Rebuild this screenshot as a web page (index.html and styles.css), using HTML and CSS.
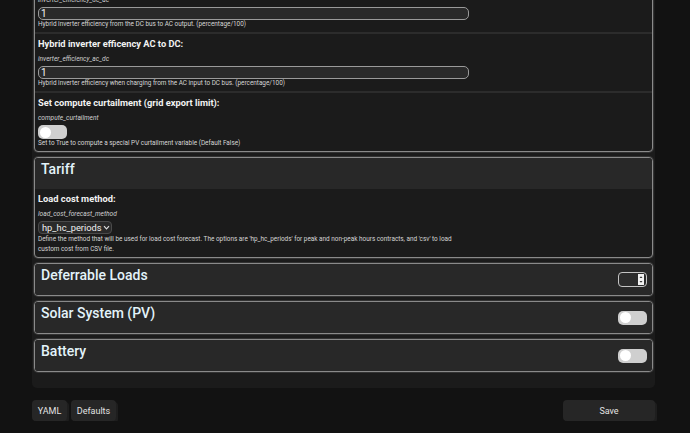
FILE: index.html
```html
<!DOCTYPE html>
<html lang="en">
<head>
    <meta charset="UTF-8" />
    <title>Config</title>
    <link rel="stylesheet" href="styles.css">
</head>
<body>
    <div class="main">
        <div class="box">
            <div class="row">
                <div class="label">Hybrid inverter efficency DC to AC:</div>
                <div class="param">inverter_efficiency_dc_ac</div>
                <div class="field">1</div>
                <div class="desc">Hybrid inverter efficiency from the DC bus to AC output. (percentage/100)</div>
            </div>
            <div class="row">
                <div class="label">Hybrid inverter efficency AC to DC:</div>
                <div class="param">inverter_efficiency_ac_dc</div>
                <div class="field">1</div>
                <div class="desc">Hybrid inverter efficiency when charging from the AC input to DC bus. (percentage/100)</div>
            </div>
            <div class="row">
                <div class="label">Set compute curtailment (grid export limit):</div>
                <div class="param">compute_curtailment</div>
                <span class="toggle"></span>
                <div class="desc">Set to True to compute a special PV curtailment variable (Default False)</div>
            </div>
        </div>

        <div class="box">
            <div class="head"><span class="title">Tariff</span></div>
            <div class="row">
                <div class="label">Load cost method:</div>
                <div class="param">load_cost_forecast_method</div>
                <div class="select">hp_hc_periods
                    <svg width="7" height="5" viewBox="0 0 7 5"><path d="M1 1.2 L3.5 3.8 L6 1.2" fill="none" stroke="#ddd" stroke-width="1.2"/></svg>
                </div>
                <div class="desc">Define the method that will be used for load cost forecast. The options are 'hp_hc_periods' for peak and non-peak hours contracts, and 'csv' to load custom cost from CSV file.</div>
            </div>
        </div>

        <div class="box">
            <div class="head">
                <span class="title">Deferrable Loads</span>
                <span class="num">
                    <svg class="spin" width="6" height="11" viewBox="0 0 6 11">
                        <rect width="6" height="11" fill="#f2f2f2"/>
                        <path d="M1.5 4 L3 2.3 L4.5 4 Z M1.5 7 L3 8.7 L4.5 7 Z" fill="#333"/>
                    </svg>
                </span>
            </div>
        </div>

        <div class="box">
            <div class="head">
                <span class="title">Solar System (PV)</span>
                <span class="toggle"></span>
            </div>
        </div>

        <div class="box">
            <div class="head">
                <span class="title">Battery</span>
                <span class="toggle"></span>
            </div>
        </div>
    </div>

    <div class="actions">
        <div class="left">
            <button class="btn yaml">YAML</button>
            <button class="btn defaults">Defaults</button>
        </div>
        <button class="btn save">Save</button>
    </div>
</body>
</html>
```

FILE: styles.css
```css
body{
    margin: 0;
    background: #121212;
    color: #e8e8e8;
    font-family: Roboto, "Liberation Sans", sans-serif;
    overflow: hidden;
}
.main{
    width: 619px;
    margin: -28px 0 0 32px;
    padding: 2px 2px 16px;
    background: #1b1b1b;
    border-radius: 0 0 5px 5px;
    display: flex;
    flex-direction: column;
    gap: 5px;
}
.box{
    border: 1px solid #8a8a8a;
    border-radius: 4px;
    box-shadow: 0 0 0 1px #333;
    background: #1b1b1b;
    overflow: hidden;
}
.row{
    padding: 3px 3px 3px;
    display: flex;
    flex-direction: column;
    align-items: flex-start;
}
.row + .row{
    border-top: 2px solid #2c2c2c;
}
.label{
    font-size: 9.3px;
    font-weight: 700;
    line-height: 14px;
    color: #f2f2f2;
}
.param{
    font-size: 6.6px;
    font-style: italic;
    line-height: 10px;
    margin-top: 3px;
    color: #d0d0d0;
}
.field{
    width: 425px;
    height: 11px;
    margin-top: 2px;
    padding: 0 2px;
    border: 1px solid #9a9a9a;
    border-radius: 5px;
    background: #2a2a2a;
    font-size: 10px;
    line-height: 11px;
    color: #f4f4f4;
}
.desc{
    font-size: 6.4px;
    line-height: 9px;
    max-width: 430px;
    color: #d6d6d6;
}
.toggle{
    display: block;
    width: 29px;
    height: 14px;
    margin-top: 2px;
    border-radius: 5px;
    background: #cfcfcf;
    position: relative;
    flex-shrink: 0;
}
.toggle::after{
    content: "";
    position: absolute;
    left: 2px;
    top: 1.5px;
    width: 11px;
    height: 11px;
    border-radius: 50%;
    background: #fff;
}
.head{
    background: #282828;
    display: flex;
    justify-content: space-between;
}
.title{
    padding: 2px 6px 11px;
    font-size: 14px;
    font-weight: 500;
    line-height: 18px;
    color: #e3f3fa;
}
.head .toggle,
.head .num{
    align-self: center;
    margin: 0 5px 0 0;
}
.num{
    width: 25px;
    height: 13px;
    border: 1px solid #c4c4c4;
    border-radius: 4px;
    background: #2c2c2c;
    display: flex;
    align-items: center;
    justify-content: flex-end;
    padding-right: 2px;
    box-sizing: content-box;
}
.num .spin{
    display: block;
}
.select{
    margin-top: 2px;
    height: 13px;
    padding: 0 1px 0 3px;
    border: 1px solid #4a4a4a;
    border-radius: 4px;
    background: #2a2a2a;
    box-sizing: border-box;
    font-size: 9.3px;
    line-height: 11px;
    color: #f0f0f0;
    display: flex;
    align-items: center;
    gap: 1px;
}
.select + .desc{
    line-height: 10px;
}
.actions{
    display: flex;
    justify-content: space-between;
    margin: 12px 35px 0 32px;
}
.left{
    display: flex;
    gap: 4px;
}
.btn{
    height: 21px;
    padding: 0;
    border: 0;
    border-radius: 4px;
    background: #262626;
    box-shadow: 2px 2px 0 #1e1e1e;
    font-family: Roboto, "Liberation Sans", sans-serif;
    font-size: 9px;
    color: #e2e2e2;
}
.yaml{
    width: 35px;
}
.defaults{
    width: 45px;
}
.save{
    width: 92px;
}
```
